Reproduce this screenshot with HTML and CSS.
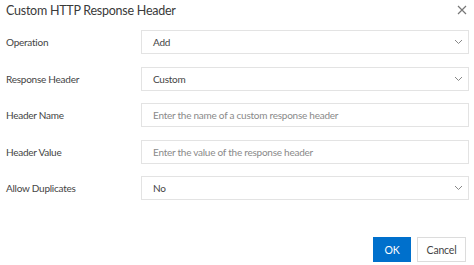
FILE: index.html
```html
<!DOCTYPE html>
<html>
<head>
<meta charset="utf-8">
<link rel="stylesheet" href="styles.css">
</head>
<body>
<div class="dialog">
  <div class="header">
    <span class="title">Custom HTTP Response Header</span>
    <svg class="close" width="10" height="10" viewBox="0 0 10 10"><path d="M1 1L9 9M9 1L1 9" stroke="#777" stroke-width="1.2" fill="none"/></svg>
  </div>
  <div class="form">
    <div class="label">Operation</div>
    <div class="field select"><span>Add</span><svg class="chev" width="9" height="6" viewBox="0 0 9 6"><path d="M1 1L4.5 4.5L8 1" stroke="#888" stroke-width="1" fill="none"/></svg></div>
    <div class="label">Response Header</div>
    <div class="field select"><span>Custom</span><svg class="chev" width="9" height="6" viewBox="0 0 9 6"><path d="M1 1L4.5 4.5L8 1" stroke="#888" stroke-width="1" fill="none"/></svg></div>
    <div class="label">Header Name</div>
    <div class="field"><span class="ph">Enter the name of a custom response header</span></div>
    <div class="label">Header Value</div>
    <div class="field"><span class="ph">Enter the value of the response header</span></div>
    <div class="label">Allow Duplicates</div>
    <div class="field select"><span>No</span><svg class="chev" width="9" height="6" viewBox="0 0 9 6"><path d="M1 1L4.5 4.5L8 1" stroke="#888" stroke-width="1" fill="none"/></svg></div>
  </div>
  <div class="footer">
    <button class="btn primary">OK</button>
    <button class="btn">Cancel</button>
  </div>
</div>
</body>
</html>
```
FILE: styles.css
```css
html, body { margin: 0; padding: 0; background: #fff; }
body { font-family: "Lato", "Open Sans", sans-serif; color: #444; width: 474px; height: 265px; overflow: hidden; }
.dialog { display: flex; flex-direction: column; }
.header { height: 20px; display: flex; align-items: center; justify-content: space-between; padding: 0 7px 0 6px; }
.title { font-size: 12.5px; color: #3a3a3a; letter-spacing: -0.25px; }
.close { display: block; }
.form { margin-top: 10px; display: grid; grid-template-columns: 135px 1fr; row-gap: 12.5px; padding: 0 5px 0 6px; }
.label { font-size: 10px; color: #444; display: flex; align-items: center; height: 24px; letter-spacing: -0.25px; }
.field { height: 24px; box-sizing: border-box; border: 1px solid #e3e3e3; display: flex; align-items: center; justify-content: space-between; padding: 0 5px 0 11px; font-size: 10px; color: #444; letter-spacing: -0.25px; }
.ph { color: #8a8a8a; }
.chev { display: block; }
.footer { display: flex; justify-content: flex-end; gap: 6px; margin-top: 37px; padding-right: 8px; }
.btn { font-family: inherit; font-size: 10.5px; height: 25px; box-sizing: border-box; border: 1px solid #dcdcdc; background: #fff; color: #444; padding: 0; width: 49px; letter-spacing: -0.2px; }
.btn.primary { background: #0070cc; border-color: #0070cc; color: #fff; width: 38px; }
```
